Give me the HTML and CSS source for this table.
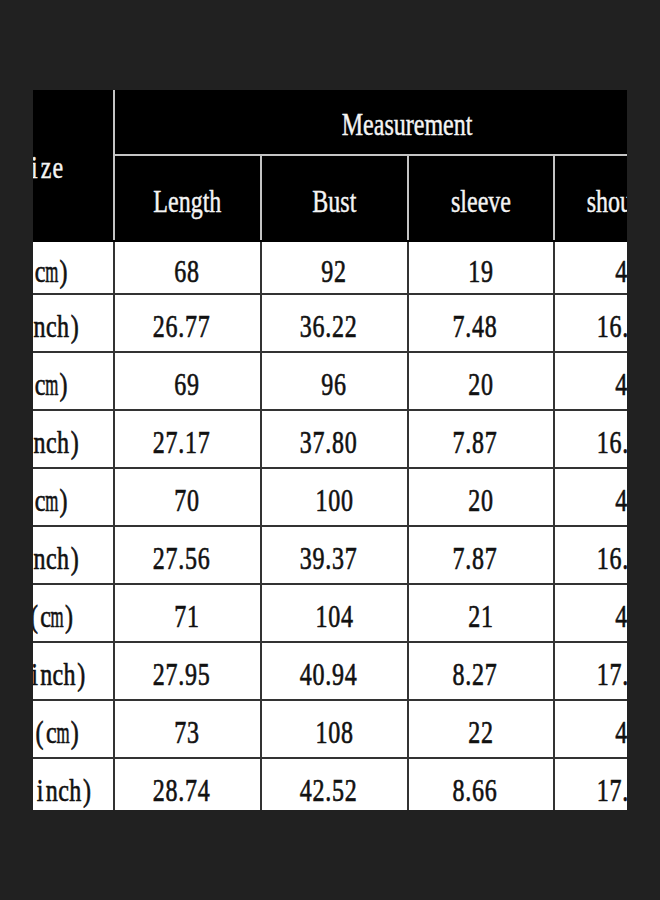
FILE: index.html
```html
<!DOCTYPE html>
<html lang="en">
<head>
<meta charset="utf-8">
<title>Size chart</title>
<link rel="stylesheet" href="styles.css">
</head>
<body>
<div class="frame">
  <div class="clip">
    <table class="sizes">
      <colgroup>
        <col class="c-size">
        <col class="c-m">
        <col class="c-m">
        <col class="c-m">
        <col class="c-m">
      </colgroup>
      <thead>
        <tr class="h1">
          <th rowspan="2" class="size-h"><span class="t mono"><span class="ch w">S</span><span class="ch">i</span><span class="ch">z</span><span class="ch">e</span></span></th>
          <th colspan="4" class="group"><span class="t">Measurement</span></th>
        </tr>
        <tr class="h2">
          <th><span class="t">Length</span></th>
          <th><span class="t">Bust</span></th>
          <th><span class="t">sleeve</span></th>
          <th><span class="t">shoulder</span></th>
        </tr>
      </thead>
      <tbody>
        <tr class="first">
          <td><span class="t mono"><span class="ch w">S</span><span class="ch">(</span><span class="ch">c</span><span class="ch w">m</span><span class="ch">)</span></span></td>
          <td><span class="t">68</span></td><td><span class="t">92</span></td><td><span class="t">19</span></td><td class="edge"><span class="t">41</span></td>
        </tr>
        <tr>
          <td><span class="t mono"><span class="ch w">S</span><span class="ch">(</span><span class="ch">i</span><span class="ch">n</span><span class="ch">c</span><span class="ch">h</span><span class="ch">)</span></span></td>
          <td class="dec"><span class="t">26.77</span></td><td class="dec"><span class="t">36.22</span></td><td class="dec"><span class="t">7.48</span></td><td class="dec edge"><span class="t">16.14</span></td>
        </tr>
        <tr>
          <td><span class="t mono"><span class="ch w">M</span><span class="ch">(</span><span class="ch">c</span><span class="ch w">m</span><span class="ch">)</span></span></td>
          <td><span class="t">69</span></td><td><span class="t">96</span></td><td><span class="t">20</span></td><td class="edge"><span class="t">42</span></td>
        </tr>
        <tr>
          <td><span class="t mono"><span class="ch w">M</span><span class="ch">(</span><span class="ch">i</span><span class="ch">n</span><span class="ch">c</span><span class="ch">h</span><span class="ch">)</span></span></td>
          <td class="dec"><span class="t">27.17</span></td><td class="dec"><span class="t">37.80</span></td><td class="dec"><span class="t">7.87</span></td><td class="dec edge"><span class="t">16.54</span></td>
        </tr>
        <tr>
          <td><span class="t mono"><span class="ch w">L</span><span class="ch">(</span><span class="ch">c</span><span class="ch w">m</span><span class="ch">)</span></span></td>
          <td><span class="t">70</span></td><td><span class="t">100</span></td><td><span class="t">20</span></td><td class="edge"><span class="t">43</span></td>
        </tr>
        <tr>
          <td><span class="t mono"><span class="ch w">L</span><span class="ch">(</span><span class="ch">i</span><span class="ch">n</span><span class="ch">c</span><span class="ch">h</span><span class="ch">)</span></span></td>
          <td class="dec"><span class="t">27.56</span></td><td class="dec"><span class="t">39.37</span></td><td class="dec"><span class="t">7.87</span></td><td class="dec edge"><span class="t">16.93</span></td>
        </tr>
        <tr>
          <td><span class="t mono"><span class="ch w">X</span><span class="ch w">L</span><span class="ch">(</span><span class="ch">c</span><span class="ch w">m</span><span class="ch">)</span></span></td>
          <td><span class="t">71</span></td><td><span class="t">104</span></td><td><span class="t">21</span></td><td class="edge"><span class="t">44</span></td>
        </tr>
        <tr>
          <td><span class="t mono"><span class="ch w">X</span><span class="ch w">L</span><span class="ch">(</span><span class="ch">i</span><span class="ch">n</span><span class="ch">c</span><span class="ch">h</span><span class="ch">)</span></span></td>
          <td class="dec"><span class="t">27.95</span></td><td class="dec"><span class="t">40.94</span></td><td class="dec"><span class="t">8.27</span></td><td class="dec edge"><span class="t">17.32</span></td>
        </tr>
        <tr>
          <td><span class="t mono"><span class="ch w">X</span><span class="ch w">X</span><span class="ch w">L</span><span class="ch">(</span><span class="ch">c</span><span class="ch w">m</span><span class="ch">)</span></span></td>
          <td><span class="t">73</span></td><td><span class="t">108</span></td><td><span class="t">22</span></td><td class="edge"><span class="t">45</span></td>
        </tr>
        <tr>
          <td><span class="t mono"><span class="ch w">X</span><span class="ch w">X</span><span class="ch w">L</span><span class="ch">(</span><span class="ch">i</span><span class="ch">n</span><span class="ch">c</span><span class="ch">h</span><span class="ch">)</span></span></td>
          <td class="dec"><span class="t">28.74</span></td><td class="dec"><span class="t">42.52</span></td><td class="dec"><span class="t">8.66</span></td><td class="dec edge"><span class="t">17.72</span></td>
        </tr>
      </tbody>
    </table>
  </div>
</div>
</body>
</html>
```

FILE: styles.css
```css
html, body {
  margin: 0;
  background: #212121;
}

.frame {
  padding: 90px 0 0 33px;
}

.clip {
  width: 594px;
  height: 720px;
  overflow: hidden;
}

.sizes {
  border-collapse: collapse;
  table-layout: fixed;
  width: 735px;
  margin-left: -68px;
  font-family: "Liberation Serif", "Times New Roman", serif;
  font-size: 32px;
  line-height: 32px;
}

.c-size {
  width: 148px;
}

.c-m {
  width: 146.75px;
}

.sizes th,
.sizes td {
  padding: 0;
  text-align: center;
  vertical-align: middle;
  white-space: nowrap;
}

.t {
  display: inline-block;
  transform: scaleX(0.75);
  -webkit-text-stroke: 0.45px currentColor;
}

.mono {
  letter-spacing: 0;
}

.ch {
  display: inline-flex;
  justify-content: center;
  width: 15.6px;
}

.ch.w {
  transform: scaleX(0.7);
}

.sizes thead th {
  background: #000;
  color: #f4f4f4;
  font-weight: normal;
  border: 2px solid #c4c4c4;
}

.h1 {
  height: 65px;
}

.sizes thead .h1 th {
  border-top: none;
  padding-top: 3px;
}

.h2 {
  height: 86px;
}

.sizes thead .h2 th {
  padding-top: 6px;
  border-bottom-color: #000;
}

.sizes thead th.size-h {
  border-bottom-color: #000;
  padding-top: 3px;
}

.sizes tbody tr {
  height: 58px;
}

.sizes tbody tr.first {
  height: 53px;
}

.sizes tbody td {
  background: #fff;
  color: #111;
  border: 2px solid #333;
  padding-top: 6px;
  letter-spacing: 1px;
}

.sizes tbody td .t {
  -webkit-text-stroke: 0.65px currentColor;
}

.sizes tbody td.dec {
  padding-right: 12px;
}

.sizes tbody td.dec.edge {
  padding-right: 5px;
}
```
